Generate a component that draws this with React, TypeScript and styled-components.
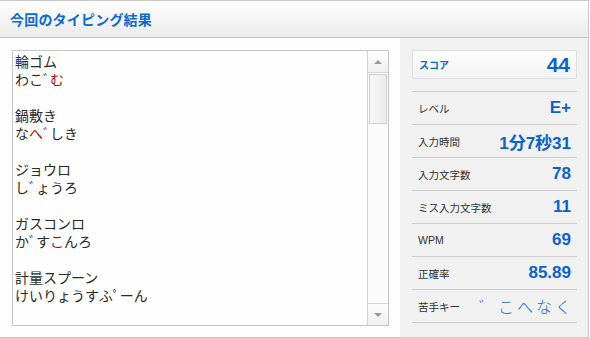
import React from "react";
import styled, { createGlobalStyle } from "styled-components";

const GlobalStyle = createGlobalStyle`
  html, body {
    margin: 0;
    padding: 0;
    background: #ffffff;
  }
`;

type Part = { text: string; miss?: boolean };
type Entry = { word: string; reading: Part[] };

const entries: Entry[] = [
  { word: "輪ゴム", reading: [{ text: "わこﾞ" }, { text: "む", miss: true }] },
  {
    word: "鍋敷き",
    reading: [{ text: "な" }, { text: "へ", miss: true }, { text: "ﾞしき" }],
  },
  { word: "ジョウロ", reading: [{ text: "しﾞょうろ" }] },
  {
    word: "ガスコンロ",
    reading: [{ text: "かﾞす" }, { text: "こ", miss: true }, { text: "んろ" }],
  },
  { word: "計量スプーン", reading: [{ text: "けいりょうすふﾟーん" }] },
];

const stats = [
  { label: "レベル", value: "E+" },
  { label: "入力時間", value: "1分7秒31" },
  { label: "入力文字数", value: "78" },
  { label: "ミス入力文字数", value: "11" },
  { label: "WPM", value: "69" },
  { label: "正確率", value: "85.89" },
];

const App: React.FC = () => {
  return (
    <>
      <GlobalStyle />
      <Panel>
        <Header>
          <Title>今回のタイピング結果</Title>
        </Header>
        <Body>
          <LogColumn>
            <LogBox>
              <LogText>
                {entries.map((e, i) => (
                  <Entry key={i}>
                    <Line>{e.word}</Line>
                    <Line>
                      {e.reading.map((p, j) => (
                        <Reading key={j} $miss={p.miss}>
                          {p.text}
                        </Reading>
                      ))}
                    </Line>
                  </Entry>
                ))}
              </LogText>
              <Scrollbar>
                <ScrollButton>
                  <Arrow $up />
                </ScrollButton>
                <Track>
                  <Thumb />
                </Track>
                <ScrollButton>
                  <Arrow />
                </ScrollButton>
              </Scrollbar>
            </LogBox>
          </LogColumn>
          <StatsColumn>
            <ScoreBox>
              <ScoreLabel>スコア</ScoreLabel>
              <ScoreValue>44</ScoreValue>
            </ScoreBox>
            <StatList>
              {stats.map((s) => (
                <StatRow key={s.label}>
                  <StatLabel>{s.label}</StatLabel>
                  <StatValue>{s.value}</StatValue>
                </StatRow>
              ))}
              <StatRow>
                <StatLabel>苦手キー</StatLabel>
                <WeakKeys>゛こへなく</WeakKeys>
              </StatRow>
            </StatList>
          </StatsColumn>
        </Body>
      </Panel>
    </>
  );
};

export default App;

const Panel = styled.div`
  width: 588px;
  height: 336px;
  border-top: 1px solid #c9c9c9;
  border-right: 1px solid #c9c9c9;
  border-bottom: 1px solid #c9c9c9;
  display: flex;
  flex-direction: column;
  font-family: "Liberation Sans", "Noto Sans CJK JP", sans-serif;
`;

const Header = styled.div`
  height: 36px;
  flex-shrink: 0;
  display: flex;
  align-items: center;
  padding-left: 10px;
  background: linear-gradient(#ffffff, #ebebeb);
  border-bottom: 1px solid #c4c4c4;
`;

const Title = styled.h1`
  margin: 0;
  font-family: "Noto Sans CJK JP", sans-serif;
  font-size: 14px;
  font-weight: 700;
  color: #0b6bcf;
  letter-spacing: 0.2px;
`;

const Body = styled.div`
  flex: 1;
  display: flex;
  min-height: 0;
`;

const LogColumn = styled.div`
  width: 400px;
  box-sizing: border-box;
  padding: 12px 11px 11px 12px;
  background: #fdfdfd;
`;

const LogBox = styled.div`
  height: 100%;
  box-sizing: border-box;
  border: 1px solid #c6c6c6;
  background: #fefefe;
  display: flex;
`;

const LogText = styled.div`
  flex: 1;
  padding: 1px 0 0 2px;
  overflow: hidden;
  font-family: "Noto Sans CJK JP", sans-serif;
  font-size: 14px;
  line-height: 18px;
  color: #2a2a2a;
`;

const Entry = styled.div`
  margin-bottom: 18px;
`;

const Line = styled.div`
  white-space: pre;
`;

const Reading = styled.span<{ $miss?: boolean }>`
  color: ${(p) => (p.$miss ? "#b01010" : "inherit")};
`;

const Scrollbar = styled.div`
  width: 20px;
  border-left: 1px solid #d4d4d4;
  display: flex;
  flex-direction: column;
  background: #fbfbfb;
`;

const ScrollButton = styled.div`
  height: 21px;
  display: flex;
  align-items: center;
  justify-content: center;
  background: linear-gradient(#fdfdfd, #f0f0f0);
  border-top: 1px solid #d6d6d6;
  border-bottom: 1px solid #d6d6d6;

  &:first-child {
    border-top: none;
  }
  &:last-child {
    border-bottom: none;
  }
`;

const Arrow = styled.div<{ $up?: boolean }>`
  width: 0;
  height: 0;
  border-left: 4px solid transparent;
  border-right: 4px solid transparent;
  ${(p) =>
    p.$up
      ? "border-bottom: 4px solid #9a9a9a;"
      : "border-top: 4px solid #9a9a9a;"}
`;

const Track = styled.div`
  flex: 1;
  padding: 1px 1px;
`;

const Thumb = styled.div`
  height: 48px;
  border: 1px solid #cfcfcf;
  background: linear-gradient(to right, #f7f7f7, #ececec);
`;

const StatsColumn = styled.div`
  flex: 1;
  box-sizing: border-box;
  padding: 12px 11px 0 12px;
  background: #f1f1f1;
`;

const ScoreBox = styled.div`
  height: 27px;
  display: flex;
  align-items: center;
  justify-content: space-between;
  padding: 0 6px;
  border: 1px solid #dedede;
  border-radius: 2px;
  background: linear-gradient(#fdfdfd, #f3f3f3);
`;

const ScoreLabel = styled.span`
  font-family: "Noto Sans CJK JP", sans-serif;
  font-size: 10px;
  font-weight: 700;
  color: #0b6bcf;
`;

const ScoreValue = styled.span`
  font-family: "Liberation Sans", sans-serif;
  font-size: 21px;
  font-weight: 700;
  color: #0b62c8;
`;

const StatList = styled.div`
  margin-top: 12px;
  border-bottom: 1px solid #cdcdcd;
`;

const StatRow = styled.div`
  height: 32px;
  display: flex;
  align-items: center;
  justify-content: space-between;
  padding: 0 6px;
  border-top: 1px solid #cdcdcd;
`;

const StatLabel = styled.span`
  font-family: "Liberation Sans", "Noto Sans CJK JP", sans-serif;
  font-size: 10.5px;
  color: #333333;
`;

const StatValue = styled.span`
  font-family: "Liberation Sans", "Noto Sans CJK JP", sans-serif;
  font-size: 17px;
  font-weight: 700;
  color: #0b62c8;
`;

const WeakKeys = styled.span`
  font-family: "Noto Sans CJK JP", sans-serif;
  font-size: 16px;
  font-weight: 300;
  letter-spacing: 3px;
  margin-right: -3px;
  color: #1668cc;
`;
